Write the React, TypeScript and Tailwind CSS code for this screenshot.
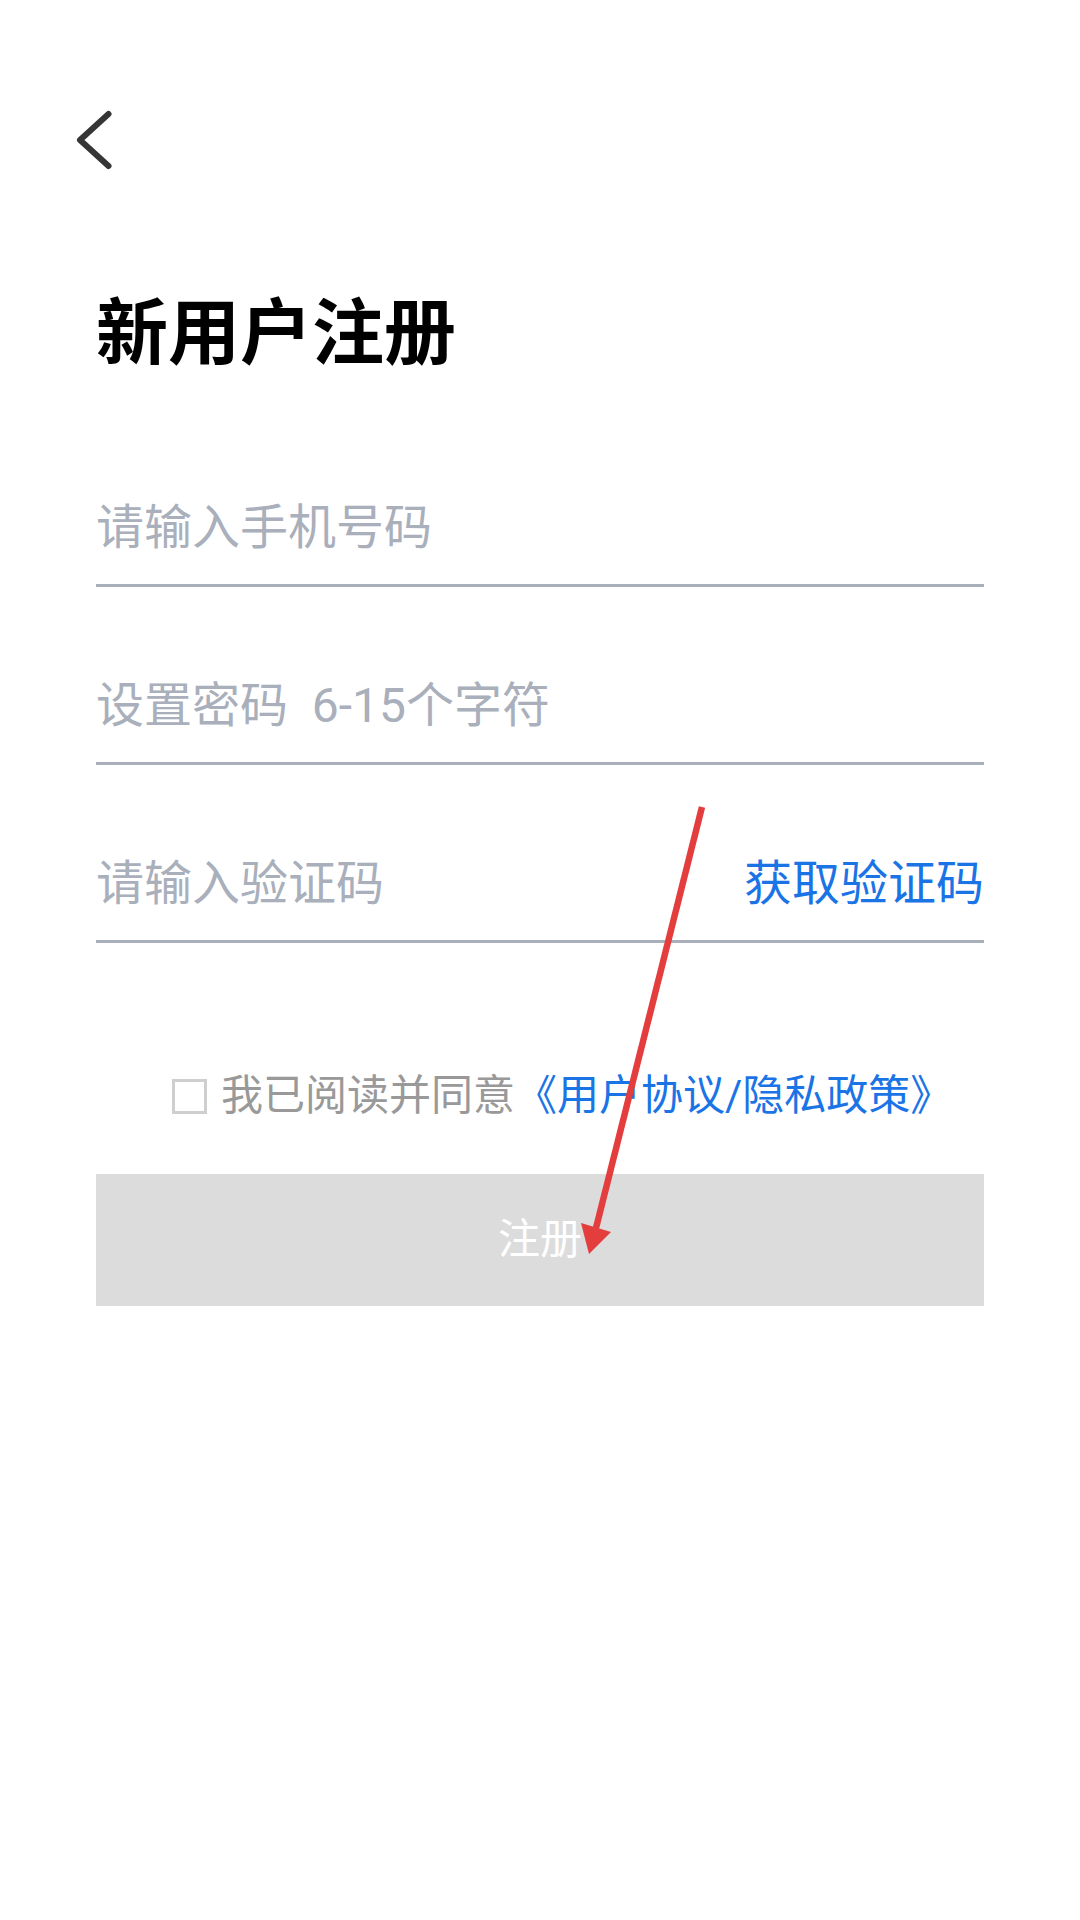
import React from "react";

const font = { fontFamily: 'Roboto, "Noto Sans CJK SC", sans-serif' };

function Field({ placeholder, action }: { placeholder: string; action?: string }) {
  return (
    <div className="flex items-center justify-between pt-[95px] pb-[32px] border-b-[3px] border-[#a9b0bc]">
      <span className="text-[48px] leading-none text-[#a9afbb] whitespace-pre">{placeholder}</span>
      {action && <span className="text-[48px] leading-none text-[#1b74e6]">{action}</span>}
    </div>
  );
}

export default function App() {
  return (
    <div className="relative w-[1080px] h-[1920px] bg-white overflow-hidden" style={font}>
      <div className="pt-[110px] pl-[76px]">
        <svg width="36" height="60" viewBox="0 0 36 60" fill="none">
          <polyline points="32.5,4 4,30 32.5,56" stroke="#363636" strokeWidth="6" strokeLinecap="round" strokeLinejoin="round" />
        </svg>
      </div>
      <div className="px-[96px]">
        <h1 className="mt-[128px] text-[72px] leading-none font-bold text-black">新用户注册</h1>
        <div className="mt-[39px]">
          <Field placeholder="请输入手机号码" />
          <Field placeholder="设置密码  6-15个字符" />
          <Field placeholder="请输入验证码" action="获取验证码" />
        </div>
        <div className="mt-[133px] flex items-center pl-[76px] h-[40px]">
          <span className="w-[35px] h-[35px] border-[3px] border-[#cfcfcf] bg-white"></span>
          <span className="ml-[14px] text-[42px] leading-none text-[#999999]">
            我已阅读并同意<span className="text-[#1b74e6]">《用户协议/隐私政策》</span>
          </span>
        </div>
        <button className="mt-[58px] w-full h-[132px] bg-[#dcdcdc] flex items-center justify-center text-[42px] leading-none text-white" style={font}>
          注册
        </button>
      </div>
      <svg className="absolute inset-0 pointer-events-none" width="1080" height="1920" viewBox="0 0 1080 1920">
        <line x1="702" y1="807" x2="596" y2="1228" stroke="#e33d3d" strokeWidth="6.5" />
        <polygon points="581,1223 611,1232 589,1254" fill="#e33d3d" />
      </svg>
    </div>
  );
}
